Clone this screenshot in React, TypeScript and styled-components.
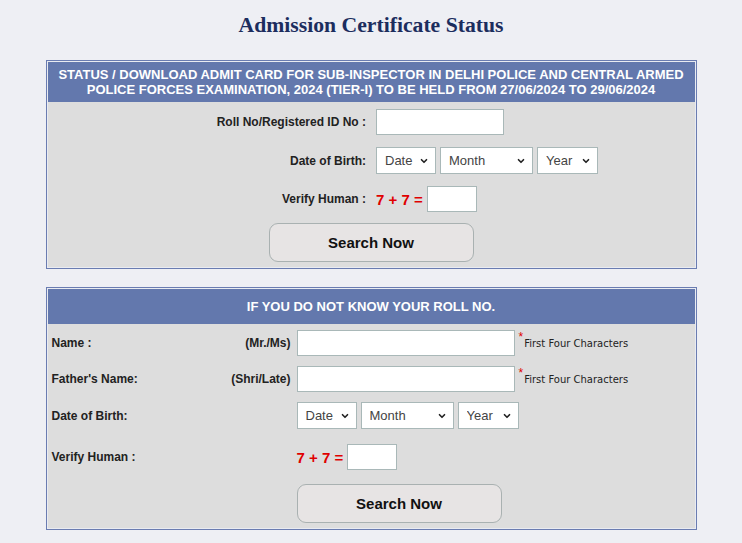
import React from "react";
import styled, { createGlobalStyle } from "styled-components";
import { ChevronDown } from "lucide-react";

const Global = createGlobalStyle`
  html, body { margin: 0; padding: 0; background: #eeeff4; }
  body { font-family: "Liberation Sans", Arial, sans-serif; color: #222; }
  * { box-sizing: border-box; }
`;

const Page = styled.div`
  padding: 12px 0 14px;
`;

const Title = styled.h1`
  margin: 0 0 22px;
  text-align: center;
  font-family: "Liberation Serif", Georgia, serif;
  font-weight: bold;
  font-size: 21.7px;
  line-height: 26px;
  color: #1c2d5e;
`;

const Panel = styled.section`
  width: 651px;
  margin: 0 auto;
  border: 1px solid #6a7cb1;
  padding: 1px;
  background: #e9ebf1;
  & + & {
    margin-top: 18px;
  }
`;

const Header = styled.div<{ $pad: number }>`
  background: #6378ad;
  color: #fff;
  font-weight: bold;
  font-size: 13px;
  line-height: 15px;
  text-align: center;
  padding: ${(p) => p.$pad}px 4px;
`;

const Line = styled.div`
  white-space: nowrap;
`;

const TopBody = styled.div`
  background: #dddddd;
  padding: 7px 0 5px;
  display: grid;
  grid-template-columns: 1fr 1fr;
  column-gap: 10px;
  row-gap: 12px;
  align-items: center;
`;

const Label = styled.label<{ $align?: string }>`
  font-size: 12px;
  font-weight: bold;
  color: #222;
  text-align: ${(p) => p.$align || "left"};
`;

const Controls = styled.div<{ $gap?: number }>`
  display: flex;
  align-items: center;
  gap: ${(p) => p.$gap ?? 4}px;
`;

const TextInput = styled.input<{ $w: number }>`
  width: ${(p) => p.$w}px;
  height: 26px;
  border: 1px solid #a9b8b8;
  background: #fff;
  padding: 0 4px;
  font-size: 13px;
  outline: none;
`;

const SelectBox = styled.div<{ $w: number }>`
  width: ${(p) => p.$w}px;
  height: 27px;
  border: 1px solid #a9b8b8;
  background: #fff;
  display: flex;
  align-items: center;
  padding-right: 6px;
  color: #222;
`;

const NativeSelect = styled.select`
  appearance: none;
  -webkit-appearance: none;
  border: none;
  background: transparent;
  flex: 1;
  min-width: 0;
  height: 100%;
  padding: 0 0 0 8px;
  font-family: "Liberation Sans", Arial, sans-serif;
  font-size: 13px;
  color: #444;
  outline: none;
`;

const Sum = styled.span`
  color: #e00000;
  font-weight: bold;
  font-size: 15px;
  white-space: nowrap;
`;

const Button = styled.button`
  width: 205px;
  height: 39px;
  border: 1px solid #a9b1b1;
  border-radius: 9px;
  background: #e7e4e4;
  font-family: "Liberation Sans", Arial, sans-serif;
  font-weight: bold;
  font-size: 15px;
  color: #111;
  cursor: pointer;
`;

const CenterCell = styled.div`
  grid-column: 1 / -1;
  display: flex;
  justify-content: center;
  margin-top: -1px;
`;

const BottomBody = styled.div`
  background: #dddddd;
  padding: 6px 0 5px 4px;
  display: grid;
  grid-template-columns: 160px 73px 1fr;
  column-gap: 6px;
  align-items: center;
`;

const Row = styled.div<{ $mt: number }>`
  display: contents;
  & > * {
    margin-top: ${(p) => p.$mt}px;
  }
`;

const Hint = styled.span`
  font-family: "DejaVu Sans", Verdana, sans-serif;
  font-size: 10px;
  line-height: 12px;
  color: #222;
  margin-top: 2px;
  white-space: nowrap;
`;

const Star = styled.span`
  color: #e00000;
  font-size: 12px;
  line-height: 12px;
  align-self: flex-start;
  margin: 1px 1px 0 4px;
`;

const ThirdCell = styled.div`
  grid-column: 3;
  display: flex;
  align-items: center;
`;

const Select = ({ w, label, options }: { w: number; label: string; options: string[] }) => (
  <SelectBox $w={w}>
    <NativeSelect defaultValue="">
      <option value="">{label}</option>
      {options.map((o) => (
        <option key={o} value={o}>
          {o}
        </option>
      ))}
    </NativeSelect>
    <ChevronDown size={10} strokeWidth={4} color="#222" />
  </SelectBox>
);

const days = Array.from({ length: 31 }, (_, i) => String(i + 1).padStart(2, "0"));
const months = [
  "January", "February", "March", "April", "May", "June",
  "July", "August", "September", "October", "November", "December",
];
const years = Array.from({ length: 30 }, (_, i) => String(1985 + i));

const DobSelects = () => (
  <Controls $gap={4}>
    <Select w={60} label="Date" options={days} />
    <Select w={93} label="Month" options={months} />
    <Select w={61} label="Year" options={years} />
  </Controls>
);

export default function App() {
  return (
    <>
      <Global />
      <Page>
        <Title>Admission Certificate Status</Title>

        <Panel>
          <Header $pad={5}>
            <Line>STATUS / DOWNLOAD ADMIT CARD FOR SUB-INSPECTOR IN DELHI POLICE AND CENTRAL ARMED</Line>
            <Line>POLICE FORCES EXAMINATION, 2024 (TIER-I) TO BE HELD FROM 27/06/2024 TO 29/06/2024</Line>
          </Header>
          <TopBody>
            <Label $align="right">Roll No/Registered ID No :</Label>
            <Controls>
              <TextInput $w={128} />
            </Controls>

            <Label $align="right">Date of Birth:</Label>
            <DobSelects />

            <Label $align="right">Verify Human :</Label>
            <Controls>
              <Sum>7 + 7 =</Sum>
              <TextInput $w={50} />
            </Controls>

            <CenterCell>
              <Button>Search Now</Button>
            </CenterCell>
          </TopBody>
        </Panel>

        <Panel>
          <Header $pad={10}>
            <Line>IF YOU DO NOT KNOW YOUR ROLL NO.</Line>
          </Header>
          <BottomBody>
            <Row $mt={0}>
              <Label>Name :</Label>
              <Label $align="right">(Mr./Ms)</Label>
              <ThirdCell>
                <TextInput $w={218} />
                <Star>*</Star>
                <Hint>First Four Characters</Hint>
              </ThirdCell>
            </Row>
            <Row $mt={10}>
              <Label>Father's Name:</Label>
              <Label $align="right">(Shri/Late)</Label>
              <ThirdCell>
                <TextInput $w={218} />
                <Star>*</Star>
                <Hint>First Four Characters</Hint>
              </ThirdCell>
            </Row>
            <Row $mt={10}>
              <Label>Date of Birth:</Label>
              <span />
              <ThirdCell>
                <DobSelects />
              </ThirdCell>
            </Row>
            <Row $mt={15}>
              <Label>Verify Human :</Label>
              <span />
              <ThirdCell>
                <Controls>
                  <Sum>7 + 7 =</Sum>
                  <TextInput $w={50} />
                </Controls>
              </ThirdCell>
            </Row>
            <Row $mt={14}>
              <span />
              <span />
              <ThirdCell>
                <Button>Search Now</Button>
              </ThirdCell>
            </Row>
          </BottomBody>
        </Panel>
      </Page>
    </>
  );
}
